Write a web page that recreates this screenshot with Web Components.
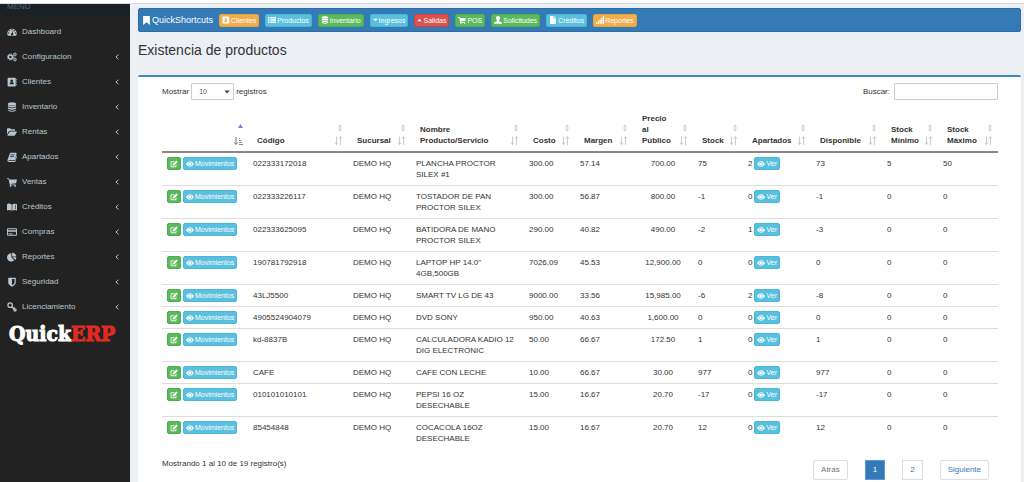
<!DOCTYPE html>
<html lang="es">
<head>
<meta charset="utf-8">
<title>QuickERP - Existencia de productos</title>
<style>
html,body{margin:0;height:100%}
body{font:8px/11px "Liberation Sans",Arial,sans-serif;color:#333;background:#ecf0f5}
</style>
</head>
<body>
<erp-app></erp-app>
<script>
const ICONS = {
  dashboard:'<path fill-rule="evenodd" d="M1 13a7.500 7.500 0 1 1 14 0l-1 1H2zM8 3.200a1 1 0 1 0 .01 0zM3.800 5a1 1 0 1 0 .01 0zM12.200 5a1 1 0 1 0 .01 0zM2.500 8.500a1 1 0 1 0 .01 0zM13.500 8.500a1 1 0 1 0 .01 0zM9.500 5.500l-1.300 4a1.800 1.800 0 1 0 1 .3l1.200-4z"/>',
  cogs:'<g fill="none" stroke="currentColor"><circle cx="5.500" cy="8" r="3.200" stroke-width="2.400"/><circle cx="5.500" cy="8" r="4.900" stroke-width="1.400" stroke-dasharray="1.950 1.900"/><circle cx="12.700" cy="4" r="1.700" stroke-width="1.500"/><circle cx="12.700" cy="4" r="2.800" stroke-width="1" stroke-dasharray="1.200 1"/><circle cx="12.700" cy="12" r="1.700" stroke-width="1.500"/><circle cx="12.700" cy="12" r="2.800" stroke-width="1" stroke-dasharray="1.200 1"/></g>',
  contact:'<path fill-rule="evenodd" d="M2 1h11q1 0 1 1v12q0 1-1 1H2q-1 0-1-1V2q0-1 1-1zM7.500 4a2.200 2.200 0 1 0 .01 0zM4 11.500h7q0-3-2-3H6q-2 0-2 3z"/><path d="M14.500 3h1v2.500h-1zm0 4h1v2.500h-1zm0 4h1v2.500h-1z"/>',
  database:'<ellipse cx="8" cy="3" rx="6.500" ry="2.500"/><path d="M1.500 4.800q6.500 3.200 13 0v2.200q-6.500 3.600-13 0zM1.500 8.500q6.500 3.200 13 0v2.200q-6.500 3.600-13 0zM1.500 12.200q6.500 3.200 13 0v1.300q-6.500 4-13 0z"/>',
  folder:'<path d="M0 12V3q0-1 1-1h4q1 0 1 1v.500h6q1 0 1 1V6H5q-1.500 0-2.500 1.500zM.500 14l3.200-5.500Q4.300 7 6 7h9.500q.8 0 .3 1l-3 5q-.8 1-2 1z"/>',
  book:'<path fill-rule="evenodd" d="M5 1h9.500q1.300.300 1 1.500L13 12q-.4 1-1.300 1H3q-1 .2-.8.900.2.600 1 .600h9.500l2.300-8.500q1 .5.700 1.500l-2.200 7.500q-.4 1-1.500 1H3Q.500 15.500.600 13zM5.800 4l-.3 1.200h6.500l.3-1.200zM5 6.500l-.3 1.200h6.500l.3-1.200z"/>',
  cart:'<path d="M0 2h3.300l.5 2H16l-1.400 6-9 1 .2 1H14v1.300H4.700L2.300 3.300H0z"/><circle cx="5.800" cy="14.300" r="1.400"/><circle cx="13" cy="14.300" r="1.400"/>',
  money:'<path d="M0 4q1.500-2 4-1.500L7.500 4v10Q4 11.500 0 13.500z"/><path d="M8.500 4q3-2.500 7.500-.500v10q-4-2-7.500.500z"/><path d="M13.500 4.500v7" stroke="#222" stroke-width="1"/>',
  card:'<path fill-rule="evenodd" d="M1.500 2h13q1.500 0 1.500 1.500v9q0 1.500-1.500 1.500h-13Q0 14 0 12.500v-9Q0 2 1.500 2zM1.500 3.500v1.500h13V3.500zM1.500 7.500v5h13v-5zM2.500 10h2v1.500h-2zM5.500 10h3v1.500h-3z"/>',
  pie:'<path d="M7 2v6.500l4.500 4.600A6.600 6.600 0 1 1 7 2z"/><path d="M8.300 1a6.500 6.500 0 0 1 6.300 6.300H8.300zM9 8.500h6q-.2 2.500-1.800 4.200z"/>',
  shield:'<path fill-rule="evenodd" d="M2 1h12v8q0 3.500-6 6.500-6-3-6-6.500zM8 3v10q4-2 4-4V3z"/>',
  key:'<g fill="none" stroke="currentColor" stroke-width="2"><circle cx="5" cy="5" r="3.500"/><path d="M7.500 7.500l6 6M10 10.500l2-2"/><circle cx="12.800" cy="12.800" r="1.800"/></g>',
  chevron:'<path d="M12 2L5 8l7 6" fill="none" stroke="currentColor" stroke-width="2.500"/>',
  bookmark:'<path d="M2 0h12v16l-6-5-6 5z"/>',
  list:'<path d="M0 2h3v3H0zm4.500 0H16v3H4.500zM0 6.500h3v3H0zm4.500 0H16v3H4.500zM0 11h3v3H0zm4.500 0H16v3H4.500z"/>',
  down:'<path d="M1 4h14l-7 8z"/>',
  up:'<path d="M1 12h14L8 4z"/>',
  user:'<path d="M8 0q4 0 4 4 0 3-2 5v1.500l5 2q1 .5 1 3H0q0-2.500 1-3l5-2V9Q4 7 4 4q0-4 4-4z"/>',
  file:'<path d="M2 0h7v5.500h5V16H2zM10.200 0L14 4.300h-3.800z"/>',
  signal:'<path d="M0 13h2.500v3H0zm3.500-3H6v6H3.500zM7 7h2.500v9H7zm3.500-4H13v13h-2.500zM14 0h2v16h-2z"/>',
  edit:'<path d="M12 9v4.500H2v-10h7" fill="none" stroke="currentColor" stroke-width="1.700"/><path d="M13 1l2.500 2.500L8 11H5.300V8.300z"/>',
  eye:'<path fill-rule="evenodd" d="M0 8q3.500-5.500 8-5.500T16 8q-3.500 5.500-8 5.500T0 8zm8-4a3.900 3.900 0 1 0 .01 0zm-.8 1.400q.8.800-.2 1.400t-1.500.4q.2-1.500 1.700-1.800z"/><circle cx="8" cy="8" r="3"/>'
};

function define(name, render) {
  customElements.define(name, class extends HTMLElement {
    connectedCallback() {
      if (this.shadowRoot) return;
      this.attachShadow({mode:'open'}).innerHTML = render(this);
    }
  });
}

define('erp-icon', el => `<style>:host{display:inline-flex;flex:none;width:8px;height:8px}svg{width:100%;height:100%;fill:currentColor}</style>
<svg viewBox="0 0 16 16" aria-hidden="true">${ICONS[el.getAttribute('name')] || ''}</svg>`);

define('erp-button', el => `<style>
:host{display:inline-flex;flex:none}
button{display:inline-flex;align-items:center;justify-content:center;gap:1px;height:13px;margin:0;padding:0 2px;border:1px solid var(--edge);border-radius:2px;background:var(--fill);color:#fff;font:7px/11px "Liberation Sans",Arial,sans-serif;white-space:nowrap}
:host([tone=info]){--fill:#5bc0de;--edge:#46b8da}
:host([tone=success]){--fill:#5cb85c;--edge:#4cae4c}
:host([tone=warning]){--fill:#f0ad4e;--edge:#eea236}
:host([tone=danger]){--fill:#d9534f;--edge:#d43f3a}
:host([small]) erp-icon{width:5px}
</style><button type="button" aria-label="${el.getAttribute('label') || el.textContent}"><erp-icon name="${el.getAttribute('icon')}"></erp-icon><slot></slot></button>`);

define('erp-nav-item', el => `<style>
:host{display:block}
a{display:flex;align-items:center;height:25px;padding:0 10px 0 7px;color:#b8c7ce;text-decoration:none}
.label{flex:1;margin-left:5px}
erp-icon[name=chevron]{width:6px;height:6px}
.main{width:10px;height:10px}
</style><a href="#"><erp-icon class="main" name="${el.getAttribute('icon')}"></erp-icon><span class="label"><slot></slot></span>${el.hasAttribute('leaf') ? '' : '<erp-icon name="chevron"></erp-icon>'}</a>`);

define('erp-logo', () => `<style>
:host{display:block;padding:3px 9px 0;font:bold 21px/24px "DejaVu Serif Condensed","DejaVu Serif",serif;color:#fff;-webkit-text-stroke:1px currentColor;white-space:nowrap}
span{color:#e02b20}
</style>Quick<span>ERP</span>`);

define('erp-sidebar', () => `<style>
:host{display:block;background:#222}
h2{margin:0 0 2px;padding:0 7px 8px;background:#1a2226;color:#4b646f;font:8px/5px "Liberation Sans",Arial,sans-serif}
</style><h2>MENU</h2><nav>
${[['dashboard','Dashboard'],['cogs','Configuracion'],['contact','Clientes'],['database','Inventario'],['folder','Rentas'],['book','Apartados'],['cart','Ventas'],['money','Créditos'],['card','Compras'],['pie','Reportes'],['shield','Seguridad'],['key','Licenciamiento']]
  .map(([i,t],n) => `<erp-nav-item icon="${i}"${n ? '' : ' leaf'}>${t}</erp-nav-item>`).join('')}
</nav><erp-logo></erp-logo>`);

define('erp-shortcuts', () => `<style>
:host{display:flex;align-items:center;gap:6px;box-sizing:border-box;height:24px;padding:0 3px;background:#337ab7;border:1px solid #2e6da4;border-radius:2px}
.title{display:flex;align-items:center;gap:1px;color:#fff;font-size:9px}
.title erp-icon{width:9px;height:9px}
</style><span class="title"><erp-icon name="bookmark"></erp-icon>QuickShortcuts</span>
<erp-button tone="warning" icon="contact">Clientes</erp-button>
<erp-button tone="info" icon="list">Productos</erp-button>
<erp-button tone="success" icon="database">Inventario</erp-button>
<erp-button tone="info" icon="down" small>Ingresos</erp-button>
<erp-button tone="danger" icon="up" small>Salidas</erp-button>
<erp-button tone="success" icon="cart">POS</erp-button>
<erp-button tone="success" icon="user">Solicitudes</erp-button>
<erp-button tone="info" icon="file">Créditos</erp-button>
<erp-button tone="warning" icon="signal">Reportes</erp-button>`);

define('erp-table-tools', () => `<style>
:host{display:flex;justify-content:space-between;align-items:center}
label{display:flex;align-items:center;gap:2px}
.pick{position:relative;display:flex}
select,input{box-sizing:border-box;height:17px;margin:0;border:1px solid #ccc;border-radius:1px;background:#fff;color:#555;font:7px/11px "Liberation Sans",Arial,sans-serif}
select{appearance:none;width:43px;padding:0 7px}
.pick erp-icon{position:absolute;right:4px;top:5px;width:6px;pointer-events:none;color:#444}
input{width:104px;margin-left:2px;padding:0 4px}
</style><label>Mostrar <span class="pick"><select><option>10</option><option>25</option><option>50</option></select><erp-icon name="down"></erp-icon></span> registros</label>
<label>Buscar: <input type="search"></label>`);

define('erp-sort', el => `<style>
:host{display:block;flex:none;width:9px;height:22px}
svg{display:block}
</style><svg width="9" height="22" viewBox="0 0 9 22" aria-hidden="true">${el.hasAttribute('active')
  ? '<path d="M4 4h5L6.500 0z" fill="#7b7be0"/><path d="M2 13v7M.500 18.500L2 20.500l1.500-2" stroke="#777" fill="none"/><path d="M5 20.500h4M5 18.500h3M5 16.500h2.500M5 14.500h1" stroke="#888"/>'
  : '<path d="M4 3.500h4L6 0zM4 4.500h4L6 8z" fill="#d4d4d4"/><path d="M2.500 12.500v8M1 18.500l1.500 2 1.500-2M6.500 21v-8M5 14.500l1.500-2 1.500 2" stroke="#ccc" fill="none"/>'}</svg>`);

const COLS = [['',86],['Código',100],['Sucursal',63],['Nombre Producto/Servicio',113],['Costo',51],['Margen',58],['Precio<br>al<br>Público',60],['Stock',50],['Apartados',68],['Disponible',71],['Stock Mínimo',56],['Stock Máximo',60]];
const ROWS = [
['022333172018','PLANCHA PROCTOR<br>SILEX #1','300.00','57.14','700.00','75','2','73','5','50'],
['022333226117','TOSTADOR DE PAN<br>PROCTOR SILEX','300.00','56.87','800.00','-1','0','-1','0','0'],
['022333625095','BATIDORA DE MANO<br>PROCTOR SILEX','290.00','40.82','490.00','-2','1','-3','0','0'],
['190781792918','LAPTOP HP 14.0"<br>4GB,500GB','7026.09','45.53','12,900.00','0','0','0','0','0'],
['43LJ5500','SMART TV LG DE 43','9000.00','33.56','15,985.00','-6','2','-8','0','0'],
['4905524904079','DVD SONY','950.00','40.63','1,600.00','0','0','0','0','0'],
['kd-8837B','CALCULADORA KADIO 12<br>DIG ELECTRONIC','50.00','66.67','172.50','1','0','1','0','0'],
['CAFE','CAFE CON LECHE','10.00','66.67','30.00','977','0','977','0','0'],
['010101010101','PEPSI 16 OZ<br>DESECHABLE','15.00','16.67','20.70','-17','0','-17','0','0'],
['85454848','COCACOLA 16OZ<br>DESECHABLE','15.00','16.67','20.70','12','0','12','0','0']];

define('erp-products', () => `<style>
:host{display:block}
table{width:100%;table-layout:fixed;border-collapse:separate;border-spacing:0;font:inherit}
th{padding:5px 5px 5px 9px;border-bottom:2px solid #888;text-align:left;vertical-align:bottom}
th div{display:flex;align-items:flex-end;justify-content:space-between}
td{padding:5px 0 5px 5px;border-bottom:1px solid #ddd;vertical-align:top;white-space:nowrap}
tr:last-child td{border-bottom-color:transparent}
td.acts{padding:4px 0 4px 5px}
td.acts div{display:flex;align-items:center;gap:2px}
td.price{text-align:center;padding:5px 0}
</style><table><colgroup>${COLS.map(c => `<col style="width:${c[1]}px">`).join('')}</colgroup>
<thead><tr>${COLS.map(([t],i) => `<th scope="col"${i ? '' : ' aria-sort="ascending"'}><div><span>${t}</span><erp-sort${i ? '' : ' active'}></erp-sort></div></th>`).join('')}</tr></thead>
<tbody>${ROWS.map(([code,name,cost,margin,price,stock,held,free,min,max]) => `<tr>
<td class="acts"><div><erp-button tone="success" icon="edit" label="Editar"></erp-button><erp-button tone="info" icon="eye">Movimientos</erp-button></div></td>
<td>${code}</td><td>DEMO HQ</td><td>${name}</td><td>${cost}</td><td>${margin}</td><td class="price">${price}</td><td>${stock}</td>
<td class="acts"><div>${held}<erp-button tone="info" icon="eye">Ver</erp-button></div></td><td>${free}</td><td>${min}</td><td>${max}</td></tr>`).join('')}</tbody></table>`);

define('erp-pager', () => `<style>
:host{display:flex;justify-content:space-between;align-items:flex-start}
p{margin:0;padding-top:2px}
nav{display:flex;gap:17px;padding:4px 9px 0 0}
a{box-sizing:border-box;height:20px;padding:0 7px;border:1px solid #ddd;background:#fff;color:#337ab7;line-height:18px;text-decoration:none}
a:first-child,a:last-child{border-radius:2px}
a.off{color:#777}
a.on{background:#337ab7;border-color:#5b94e0;color:#fff}
</style><p>Mostrando 1 al 10 de 19 registro(s)</p>
<nav aria-label="Paginación"><a class="off" href="#">Atras</a><a class="on" href="#" aria-current="page">1</a><a href="#">2</a><a href="#">Siguiente</a></nav>`);

define('erp-card', () => `<style>
:host{display:block;flex:1;padding:6px 23px 0 24px;background:#fff;border-top:2px solid #3c8dbc;border-radius:2px 2px 0 0}
</style><slot></slot>`);

define('erp-app', () => `<style>
:host{display:flex;flex-direction:column;min-height:100%}
header{height:3px;background:#fff;border-bottom:1px solid #d9dce2}
.body{flex:1;display:grid;grid-template-columns:130px 1fr}
main{display:flex;flex-direction:column;padding:4px 3px 0 8px;min-width:0}
h1{margin:10px 0 17px;font:14px/16px "Liberation Sans",Arial,sans-serif}
erp-products{margin-top:8px}
erp-pager{margin-top:6px}
</style><header></header><div class="body"><erp-sidebar></erp-sidebar><main>
<erp-shortcuts></erp-shortcuts><h1>Existencia de productos</h1>
<erp-card><erp-table-tools></erp-table-tools><erp-products></erp-products><erp-pager></erp-pager></erp-card>
</main></div>`);
</script>
</body>
</html>
